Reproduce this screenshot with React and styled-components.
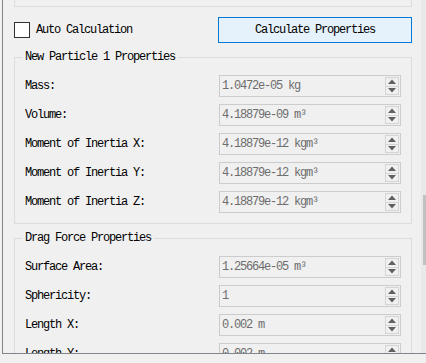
import React from 'react';
import styled, { createGlobalStyle } from 'styled-components';

const GlobalStyle = createGlobalStyle`
  html, body { margin: 0; padding: 0; background: #f0f0f0; overflow: hidden; }
  body {
    font-family: "Liberation Mono", "DejaVu Sans Mono", monospace;
    font-size: 12px;
    letter-spacing: -1.2px;
    color: #000;
  }
  * { box-sizing: border-box; }
`;

const Frame = styled.div`
  margin-left: 2px;
  height: 354px;
  border-left: 1px solid #80868c;
  border-bottom: 1px solid #80868c;
  display: flex;
  overflow: hidden;
`;

const Content = styled.div`
  flex: 1;
  min-width: 0;
  padding: 0 9px 0 11px;
  display: flex;
  flex-direction: column;
  & > * { flex-shrink: 0; }
`;

const Scrollbar = styled.div`
  width: 5px;
  background: #e9e9e9;
  display: flex;
  flex-direction: column;
  padding-top: 195px;
`;

const Thumb = styled.div`
  margin-left: 2px;
  width: 3px;
  height: 70px;
  background: #c1c1c1;
`;

const PrevGroup = styled.div`
  height: 7px;
  border: 1px solid #dcdcdc;
  border-top: none;
`;

const AutoRow = styled.div`
  margin-top: 10px;
  height: 26px;
  display: flex;
  align-items: center;
`;

const CheckBox = styled.span`
  width: 16px;
  height: 16px;
  border: 1px solid #333;
  background: #fff;
`;

const CheckLabel = styled.span`
  margin-left: 6px;
  line-height: 14px;
`;

const Button = styled.button`
  margin-left: auto;
  width: 194px;
  height: 26px;
  background: #e5f1fb;
  border: 1px solid #0078d7;
  font: inherit;
  letter-spacing: inherit;
  color: #000;
  padding: 0;
`;

const Group = styled.div`
  position: relative;
  margin-top: 14px;
  border: 1px solid #dcdcdc;
  padding: 17px 10px 10px 10px;
  display: flex;
  flex-direction: column;
  gap: 7px;
`;

const GroupTitle = styled.span`
  position: absolute;
  top: -8px;
  left: 7px;
  padding: 0 3px;
  line-height: 14px;
  background: #f0f0f0;
`;

const Row = styled.div`
  display: grid;
  grid-template-columns: 1fr 182px;
  align-items: center;
  height: 22px;
`;

const Label = styled.span`
  line-height: 14px;
`;

const SpinBox = styled.div`
  height: 22px;
  border: 1px solid #cccccc;
  display: flex;
  align-items: stretch;
`;

const Value = styled.span`
  flex: 1;
  padding-left: 2px;
  color: #6d6d6d;
  display: flex;
  align-items: center;
  white-space: nowrap;
  overflow: hidden;
`;

const Spin = styled.div`
  width: 14px;
  margin: 1px 1px 1px 0;
  display: flex;
  flex-direction: column;
`;

const SpinBtn = styled.div`
  flex: 1;
  border: 1px solid #d4d4d4;
  display: flex;
  align-items: center;
  justify-content: center;
  & + & { border-top: none; }
`;

const Arrow = ({ down }) => (
  <svg width="8" height="5" viewBox="0 0 8 5">
    {down ? (
      <polygon points="0,0 8,0 4,4.5" fill="#5f5f5f" />
    ) : (
      <polygon points="4,0.5 8,5 0,5" fill="#5f5f5f" />
    )}
  </svg>
);

const Field = ({ label, value }) => (
  <Row>
    <Label>{label}</Label>
    <SpinBox>
      <Value>{value}</Value>
      <Spin>
        <SpinBtn><Arrow /></SpinBtn>
        <SpinBtn><Arrow down /></SpinBtn>
      </Spin>
    </SpinBox>
  </Row>
);

const particle = [
  ['Mass:', '1.0472e-05 kg'],
  ['Volume:', '4.18879e-09 m³'],
  ['Moment of Inertia X:', '4.18879e-12 kgm³'],
  ['Moment of Inertia Y:', '4.18879e-12 kgm³'],
  ['Moment of Inertia Z:', '4.18879e-12 kgm³'],
];

const drag = [
  ['Surface Area:', '1.25664e-05 m³'],
  ['Sphericity:', '1'],
  ['Length X:', '0.002 m'],
  ['Length Y:', '0.002 m'],
];

export default function App() {
  return (
    <>
      <GlobalStyle />
      <Frame>
        <Content>
          <PrevGroup />
          <AutoRow>
            <CheckBox />
            <CheckLabel>Auto Calculation</CheckLabel>
            <Button>Calculate Properties</Button>
          </AutoRow>
          <Group>
            <GroupTitle>New Particle 1 Properties</GroupTitle>
            {particle.map(([l, v]) => <Field key={l} label={l} value={v} />)}
          </Group>
          <Group>
            <GroupTitle>Drag Force Properties</GroupTitle>
            {drag.map(([l, v]) => <Field key={l} label={l} value={v} />)}
          </Group>
        </Content>
        <Scrollbar><Thumb /></Scrollbar>
      </Frame>
    </>
  );
}
